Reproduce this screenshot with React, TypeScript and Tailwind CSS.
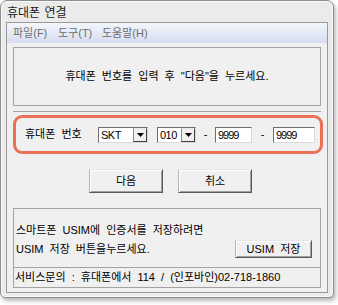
import React from "react";

function Arrow() {
  return (
    <svg width="7" height="4" viewBox="0 0 7 4">
      <path d="M0 0 H7 L3.5 4 Z" fill="#000" />
    </svg>
  );
}

function Combo({ value, w }: { value: string; w: string }) {
  return (
    <div
      className={`${w} h-[16px] shrink-0 bg-white border border-t-[#6e6e6e] border-l-[#6e6e6e] border-r-[#dadada] border-b-[#dadada] flex items-stretch`}
    >
      <div className="flex-1 pl-[2px] text-[11px] leading-[14px] tracking-[-0.5px] text-black">{value}</div>
      <div className="w-[14px] bg-[#f0f0f0] border border-t-[#e8e8e8] border-l-[#8a8a8a] border-r-[#404040] border-b-[#404040] flex items-center justify-center">
        <Arrow />
      </div>
    </div>
  );
}

function Input({ value, w }: { value: string; w: string }) {
  return (
    <div
      className={`${w} h-[16px] shrink-0 bg-white border border-t-[#6e6e6e] border-l-[#6e6e6e] border-r-[#dadada] border-b-[#dadada] pl-[2px] text-[11px] leading-[14px] tracking-[-1px] text-black`}
    >
      {value}
    </div>
  );
}

function Btn({ children, w, h }: { children: React.ReactNode; w: string; h: string }) {
  return (
    <div
      className={`${w} ${h} shrink-0 bg-[#f0f0f0] border border-t-[#e6e6e6] border-l-[#b5b5b5] border-r-[#5a5a5a] border-b-[#5a5a5a] shadow-[inset_1px_1px_0_#ffffff,inset_-1px_-1px_0_#a0a0a0] flex items-center justify-center text-[11px] text-black`}
    >
      {children}
    </div>
  );
}

export default function App() {
  return (
    <div className="w-[338px] h-[305px] bg-white font-['Liberation_Sans','Noto_Sans_CJK_KR',sans-serif] [word-spacing:3px]">
      <div className="w-[334px] h-[298px] rounded-t-[7px] rounded-b-[5px] border border-[#8f8f8f] bg-[#ebebeb] shadow-[2px_3px_4px_rgba(0,0,0,0.28),inset_0_0_0_1px_#f7f7f7] flex flex-col px-[5px] pb-[4px]">
        <div className="h-[21px] shrink-0 pt-[4px] pl-[1px] text-[12px] leading-[16px] text-[#1c1c1c] [word-spacing:1px]">
          휴대폰 연결
        </div>
        <div className="flex-1 border border-[#9a9a9a] bg-[#f0f0f0] flex flex-col">
          <div className="h-[20px] shrink-0 bg-gradient-to-b from-[#f4f6fb] to-[#d6ddf1] flex items-center pl-[6px] text-[11px] text-[#6e6e6e]">
            <span className="w-[45px]">파일(F)</span>
            <span className="w-[44px]">도구(T)</span>
            <span>도움말(H)</span>
          </div>
          <div className="flex flex-col px-[6px] pt-[4px]">
            <div className="h-[59px] border border-[#a3a3a3] flex items-center justify-center text-[11px] text-black">
              휴대폰 번호를 입력 후 "다음"을 누르세요.
            </div>
            <div className="mt-[5px] border-t border-[#a3a3a3] pt-[3px]">
              <div className="w-[310px] h-[39px] border-[3px] border-[#ea7058] rounded-[9px] flex items-center text-[11px] text-black">
                <span className="ml-[9px] w-[57px] shrink-0 whitespace-nowrap">휴대폰 번호</span>
                <div className="ml-[16px]">
                  <Combo value="SKT" w="w-[50px]" />
                </div>
                <div className="ml-[9px]">
                  <Combo value="010" w="w-[39px]" />
                </div>
                <span className="w-[19px] text-center">-</span>
                <Input value="9999" w="w-[37px]" />
                <span className="w-[21px] text-center">-</span>
                <Input value="9999" w="w-[42px]" />
              </div>
            </div>
            <div className="mt-[15px] flex pl-[76px] gap-[15px]">
              <Btn w="w-[74px]" h="h-[24px]">다음</Btn>
              <Btn w="w-[74px]" h="h-[24px]">취소</Btn>
            </div>
            <div className="mt-[15px] h-[80px] border border-[#a3a3a3] flex flex-col text-[11px] text-black">
              <div className="h-[58px] pl-[2px] pr-[8px] pt-[11px] flex flex-col">
                <div className="h-[20px] leading-[20px] whitespace-nowrap">스마트폰 USIM에 인증서를 저장하려면</div>
                <div className="h-[18px] flex items-center justify-between">
                  <span className="whitespace-nowrap">USIM 저장 버튼을누르세요.</span>
                  <Btn w="w-[77px]" h="h-[18px]">USIM 저장</Btn>
                </div>
              </div>
              <div className="h-[20px] border-t border-[#a3a3a3] flex items-center pl-[1px] whitespace-nowrap">
                서비스문의 : 휴대폰에서 114 / (인포바인)02-718-1860
              </div>
            </div>
          </div>
        </div>
      </div>
    </div>
  );
}
